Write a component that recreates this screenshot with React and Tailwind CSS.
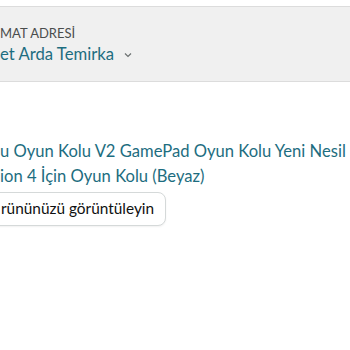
import React from "react";

export default function App() {
  return (
    <div className="w-[350px] h-[350px] overflow-hidden bg-white font-['Lato',sans-serif]">
      {/* address band */}
      <div className="mt-[6px] h-[76px] border-y border-[#dcdcdc] bg-[#f0f0f0] pt-[18px]">
        <p className="text-[13px] leading-[16px] uppercase text-[#4a4d4d]">MAT ADRESİ</p>
        <div className="mt-[2px] flex items-center gap-[10px]">
          <span className="text-[16.7px] leading-[22px] text-[#1d6d80]">et Arda Temirka</span>
          <svg width="8" height="6" viewBox="0 0 8 6" className="mt-[1px]">
            <path d="M1 1.5 L4 4.5 L7 1.5" fill="none" stroke="#6b7070" strokeWidth="1.2" />
          </svg>
        </div>
      </div>

      {/* product */}
      <div className="mt-[57px]">
        <p className="whitespace-nowrap text-[16.6px] leading-[25px] text-[#1d6d80]">
          u Oyun Kolu V2 GamePad Oyun Kolu Yeni Nesil
        </p>
        <p className="whitespace-nowrap text-[16.6px] leading-[25px] text-[#1d6d80]">
          ion 4 İçin Oyun Kolu (Beyaz)
        </p>
        <div className="mt-[3px] flex">
          <button className="ml-[-12px] h-[34px] rounded-[8px] border border-[#d5d9d9] bg-white pl-[12px] pr-[11px] text-[15.4px] text-[#0f1111] shadow-[0_1px_2px_rgba(0,0,0,0.06)]">
            rününüzü görüntüleyin
          </button>
        </div>
      </div>
    </div>
  );
}
